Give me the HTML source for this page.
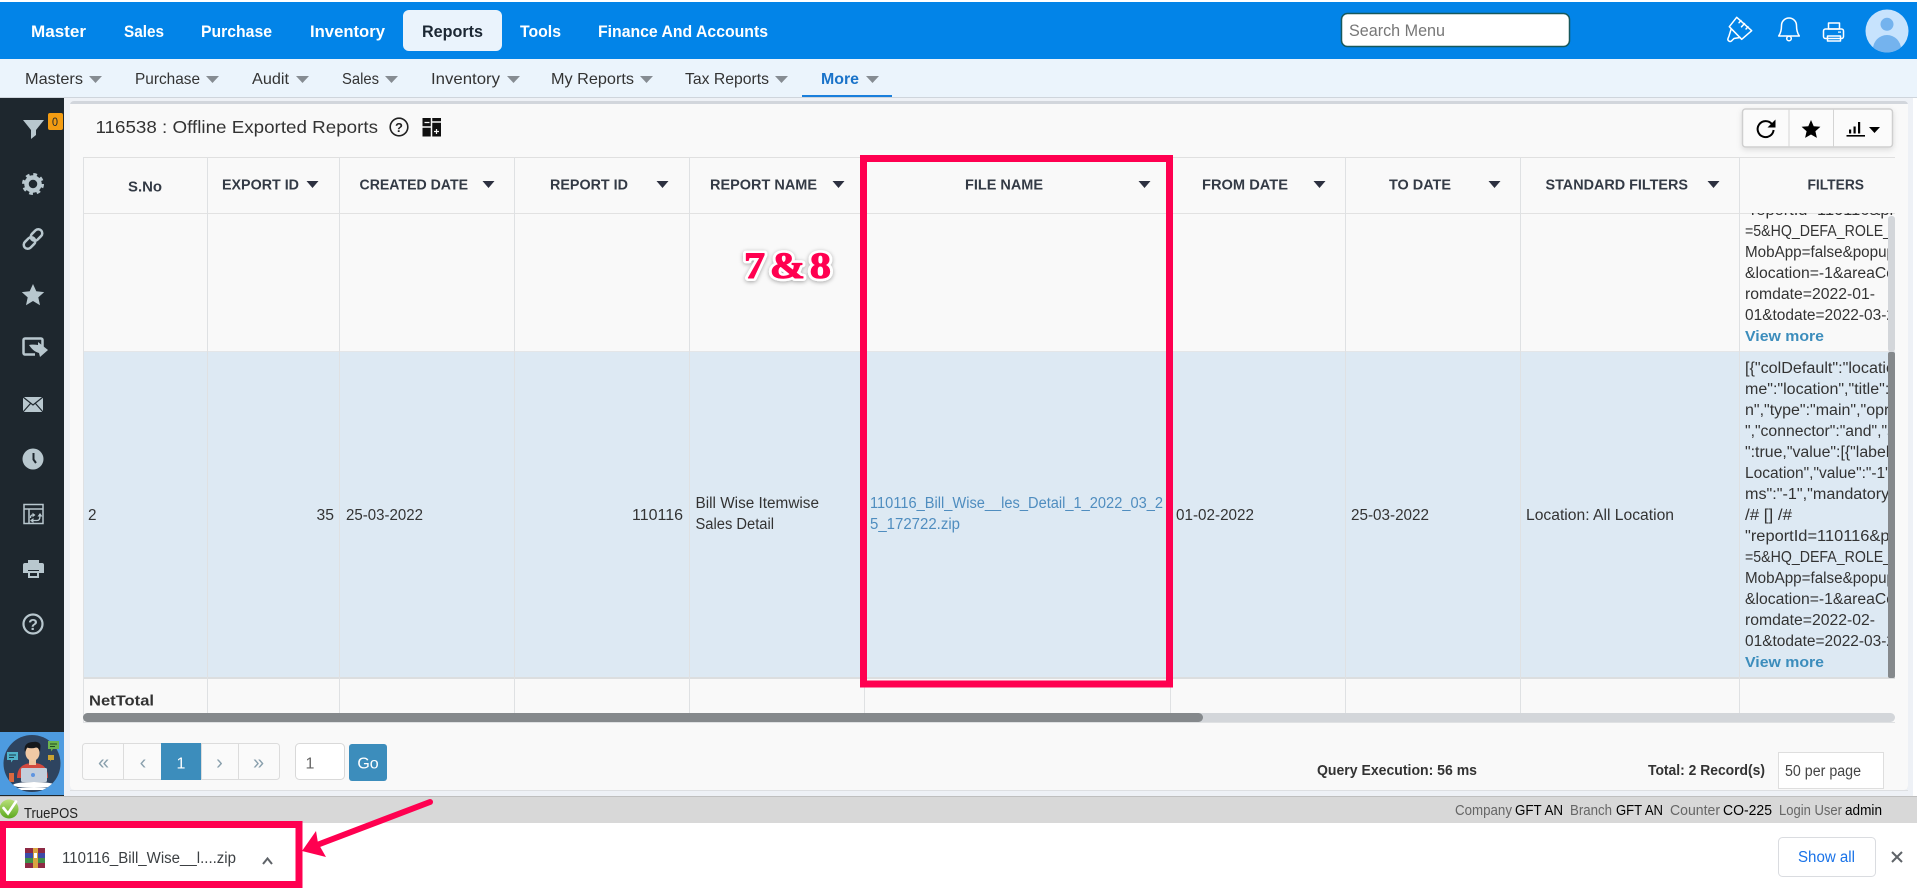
<!DOCTYPE html>
<html lang="en">
<head>
<meta charset="utf-8">
<title>Offline Exported Reports</title>
<style>
html,body{margin:0;padding:0;background:#fff;width:1917px;height:890px;overflow:hidden}
svg{display:block}
text{font-family:"Liberation Sans",Arial,sans-serif;white-space:pre}
.nav{font-size:17px;font-weight:700;fill:#fff}
.sub{font-size:16px;fill:#333}
.th{font-size:15px;font-weight:700;fill:#333a45}
.td{font-size:15.3px;fill:#333}
.lnk{font-size:15.3px;fill:#4f8dbf}
.vm{font-size:15px;font-weight:700;fill:#3c8dbc}
.b{font-size:15px;font-weight:700;fill:#333}
.st{font-size:14.5px;fill:#666}
.sv{font-size:14.5px;fill:#000}
</style>
</head>
<body>
<svg width="1917" height="890" viewBox="0 0 1917 890" xmlns="http://www.w3.org/2000/svg">
<defs>
<clipPath id="r1"><rect x="1740" y="213" width="155" height="138"/></clipPath>
<clipPath id="r2"><rect x="1740" y="352" width="155" height="325"/></clipPath>
<clipPath id="av"><circle cx="1887" cy="31" r="21.5"/></clipPath>
<clipPath id="pc"><circle cx="32" cy="763.5" r="28.5"/></clipPath>
<filter id="sh" x="-20%" y="-20%" width="140%" height="140%"><feDropShadow dx="0" dy="1" stdDeviation="2" flood-color="#000" flood-opacity=".35"/></filter>
<filter id="bs" x="-10%" y="-20%" width="120%" height="150%"><feDropShadow dx="0" dy="2" stdDeviation="3" flood-color="#000" flood-opacity=".12"/></filter>
<linearGradient id="grn" x1="0" y1="0" x2="0" y2="1"><stop offset="0" stop-color="#b9e07a"/><stop offset="1" stop-color="#5ca81e"/></linearGradient>
</defs>

<!-- page bg -->
<rect width="1917" height="890" fill="#fff"/>
<rect x="0" y="98" width="1913" height="698" fill="#eef1f6"/>

<!-- top bar -->
<rect x="0" y="2" width="1917" height="57" fill="#0284e8"/>
<rect x="403" y="10" width="99" height="41" rx="6" fill="#eaf3fc"/>
<text class="nav" x="31" y="37" textLength="55" lengthAdjust="spacingAndGlyphs">Master</text>
<text class="nav" x="124" y="37" textLength="40" lengthAdjust="spacingAndGlyphs">Sales</text>
<text class="nav" x="201" y="37" textLength="71" lengthAdjust="spacingAndGlyphs">Purchase</text>
<text class="nav" x="310" y="37" textLength="75" lengthAdjust="spacingAndGlyphs">Inventory</text>
<text class="nav" x="422" y="37" textLength="61" lengthAdjust="spacingAndGlyphs" style="fill:#1c2733">Reports</text>
<text class="nav" x="520" y="37" textLength="41" lengthAdjust="spacingAndGlyphs">Tools</text>
<text class="nav" x="598" y="37" textLength="170" lengthAdjust="spacingAndGlyphs">Finance And Accounts</text>

<!-- search -->
<rect x="1341.5" y="13.5" width="228" height="33" rx="6" fill="#fff" stroke="#17585c" stroke-width="1.5"/>
<text x="1349" y="36" font-size="16.5" fill="#777" textLength="96" lengthAdjust="spacingAndGlyphs">Search Menu</text>

<!-- header icons -->
<g fill="none" stroke="#fff" stroke-width="1.5" stroke-linejoin="round" stroke-linecap="round">
<path d="M1736.7 17.3L1751.700 30.700L1741.700 39.300L1729.300 26.700Z"/>
<path d="M1741 20.500l-2 2.200M1744.500 23.600l-3 3.200M1748 26.800l-2 2.200"/>
<path d="M1731 29.500L1729 36L1728 38.500a2.200 2.200 0 0 0 3.500 2.400L1734 38.500L1740 37.500"/>
<path d="M1789 18a7.500 7.500 0 0 0-7.500 7.500c0 5-1 8-2.800 10.500h20.600c-1.800-2.500-2.800-5.500-2.800-10.500A7.500 7.500 0 0 0 1789 18Z"/>
<circle cx="1789" cy="38.500" r="2.300"/>
<rect x="1823.500" y="29" width="20" height="9.500" rx="2"/>
<rect x="1828.500" y="23" width="11" height="6"/>
<rect x="1827.500" y="36" width="13" height="5"/>
</g>
<rect x="1838" y="31.500" width="3" height="1.200" fill="#fff"/>
<circle cx="1887" cy="31" r="21.500" fill="#c7e3fd"/>
<g clip-path="url(#av)" fill="#74b3ee"><circle cx="1887" cy="24.300" r="6.500"/><ellipse cx="1887" cy="49" rx="14" ry="14"/></g>

<!-- sub nav -->
<rect x="0" y="59" width="1917" height="38" fill="#ebf4fc"/>
<rect x="0" y="97" width="1917" height="1" fill="#cfd5dc"/>
<text class="sub" x="25" y="84" textLength="58" lengthAdjust="spacingAndGlyphs">Masters</text>
<text class="sub" x="135" y="84" textLength="65" lengthAdjust="spacingAndGlyphs">Purchase</text>
<text class="sub" x="252" y="84" textLength="37" lengthAdjust="spacingAndGlyphs">Audit</text>
<text class="sub" x="342" y="84" textLength="37" lengthAdjust="spacingAndGlyphs">Sales</text>
<text class="sub" x="431" y="84" textLength="69" lengthAdjust="spacingAndGlyphs">Inventory</text>
<text class="sub" x="551" y="84" textLength="83" lengthAdjust="spacingAndGlyphs">My Reports</text>
<text class="sub" x="685" y="84" textLength="84" lengthAdjust="spacingAndGlyphs">Tax Reports</text>
<text class="sub" x="821" y="84" textLength="38" lengthAdjust="spacingAndGlyphs" style="fill:#1a73c9;font-weight:700">More</text>
<g fill="#868c92">
<path d="M89 76h13l-6.500 7z"/><path d="M206 76h13l-6.500 7z"/><path d="M296 76h13l-6.500 7z"/><path d="M385 76h13l-6.500 7z"/><path d="M507 76h13l-6.500 7z"/><path d="M640 76h13l-6.500 7z"/><path d="M775 76h13l-6.500 7z"/><path d="M866 76h13l-6.500 7z"/>
</g>
<rect x="802" y="95" width="90" height="2" fill="#1a7fdc"/>

<!-- sidebar -->
<rect x="0" y="98" width="64" height="634" fill="#1e272e"/>
<g fill="#b8c7ce">
<path d="M23 120h21l-8 10v5l-5 4v-9z"/>
<rect x="48" y="113" width="15" height="17" rx="2" fill="#f39c12"/>
<circle cx="33" cy="184" r="6.500" fill="none" stroke="#b8c7ce" stroke-width="4.500"/>
<circle cx="33" cy="184" r="9.500" fill="none" stroke="#b8c7ce" stroke-width="3" stroke-dasharray="3.700 3.760"/>
<path d="M33 284l3.300 7.300 7.900.800-5.900 5.300 1.700 7.800L33 301l-7 4.200 1.700-7.800-5.900-5.300 7.900-.800z"/>
<circle cx="33" cy="459" r="10.500"/>
</g>
<text x="52" y="126" font-size="12" fill="#1e272e" textLength="6" lengthAdjust="spacingAndGlyphs">0</text>
<g fill="none" stroke="#b8c7ce" stroke-width="2.500">
<rect x="23" y="239" width="13" height="8" rx="4" transform="rotate(-45 29.500 243)"/>
<rect x="30" y="231" width="13" height="8" rx="4" transform="rotate(-45 36.500 235)"/>
<path d="M42.500 352v-12a1.500 1.500 0 0 0-1.500-1.500H25a1.500 1.500 0 0 0-1.500 1.500v13a1.500 1.500 0 0 0 1.500 1.500h10"/>
</g>
<path d="M29 345c5-1 7-1 9 0v-3l10 8-8 7-1-4c-3-1-6-2-10-8z" fill="#b8c7ce"/>
<path d="M28 344c4 0 7 0 10 .5" stroke="#1e272e" stroke-width="1" fill="none"/>
<rect x="23" y="397" width="20" height="15" fill="#b8c7ce"/>
<path d="M23 397l10 8 10-8M23 412l7.500-8.500M43 412l-7.500-8.500" fill="none" stroke="#1e272e" stroke-width="1.200"/>
<path d="M33.500 453v6.500l2.500 3.500" fill="none" stroke="#1e272e" stroke-width="2"/>
<rect x="24" y="504.500" width="19" height="19" fill="none" stroke="#b8c7ce" stroke-width="1.500"/>
<path d="M24 509h19M29 509v15" stroke="#b8c7ce" stroke-width="1.500" fill="none"/>
<path d="M33 520.500h4c2 0 3-1.500 3-4.500M33 515h-.5c-1.500 0-2 1-2 3" stroke="#b8c7ce" stroke-width="1.300" fill="none"/>
<path d="M30 520.500l3.500-2.500v5zM40 513l-2.500 3.500h5zM35.500 515l-3-2.300v4.600z" fill="#b8c7ce"/>
<g fill="#b8c7ce">
<rect x="28" y="560" width="11" height="4"/>
<path d="M25 563h17a2 2 0 0 1 2 2v8h-5v-3H28v3h-5v-8a2 2 0 0 1 2-2z"/>
<path d="M28 571h11v7H28zM30 573v3h7v-3z" fill-rule="evenodd"/>
</g>
<circle cx="33" cy="624" r="9.500" fill="none" stroke="#b8c7ce" stroke-width="2.200"/>
<text x="33" y="630" font-size="16" font-weight="700" fill="#b8c7ce" text-anchor="middle">?</text>

<!-- bottom avatar -->
<rect x="0" y="732" width="64" height="63" fill="#4d9be0"/>
<rect x="0" y="795" width="64" height="1" fill="#1e272e"/>
<circle cx="32" cy="763.500" r="28.500" fill="#2e4460"/>
<g clip-path="url(#pc)">
<path d="M17 778c0-11 7-15 16-15s15 4 15 15z" fill="#d2493f"/>
<rect x="29" y="758" width="7" height="7" fill="#eec6a0"/>
<ellipse cx="32.500" cy="753" rx="7" ry="8" fill="#f1c9a5"/>
<path d="M25 752c-2-8 4-10 8-10 4-1 8 1 7.500 4.500l-.5 5.500c-1-3-2-4.500-4-4.500-3 1-6 1-9 0z" fill="#15181c"/>
<rect x="21" y="768" width="26" height="14" rx="1.500" fill="#c3cedb"/>
<circle cx="33" cy="775" r="2" fill="#5f95e0"/>
<ellipse cx="34" cy="785" rx="21" ry="3" fill="#fff"/>
<rect x="14" y="788" width="40" height="2" fill="#fff"/>
<rect x="9" y="773" width="5" height="9" fill="#d9683f"/>
</g>
<path d="M7 752h11v8h-5l-2 2.500V760H7z" fill="#4fb1c9"/>
<path d="M9 755h7M9 757.500h5" stroke="#1e3a4a" stroke-width="1"/>
<path d="M48 741h11v8h-6l-2 2.500V749h-3z" fill="#6bb34f"/>
<path d="M50 744h7M50 746.500h5" stroke="#1f4a22" stroke-width="1"/>
<path d="M48 755h6v5h-3l-1 1.500V760h-2z" fill="#c9a232"/>

<!-- panel -->
<rect x="70" y="101" width="1838" height="689" rx="4" fill="#d2d6dc"/>
<path d="M70 104h1838v682a4 4 0 0 1-4 4H74a4 4 0 0 1-4-4z" fill="#f9f9f9"/>
<rect x="70" y="790" width="1838" height="1" fill="#dddfe2"/>
<rect x="1913" y="98" width="4" height="698" fill="#fff"/>

<!-- title -->
<text x="95.500" y="133" font-size="17.500" fill="#333" textLength="282.500" lengthAdjust="spacingAndGlyphs">116538 : Offline Exported Reports</text>
<circle cx="399" cy="127" r="8.800" fill="none" stroke="#222" stroke-width="1.600"/>
<text x="399" y="132" font-size="13" font-weight="700" fill="#222" text-anchor="middle">?</text>
<rect x="422.500" y="118" width="18.500" height="18.500" fill="#111"/>
<path d="M431.500 118v18.500M422.500 127h9M431.500 122h9.500" stroke="#f9f9f9" stroke-width="1.500" fill="none"/>
<path d="M424.500 122.500h5M434 131.500h5M436.500 129v5" stroke="#f9f9f9" stroke-width="1.200" fill="none"/>

<!-- toolbar -->
<rect x="1742.500" y="109" width="150" height="38" rx="3" fill="#fbfbfb" stroke="#cfcfcf" stroke-width="1.500" filter="url(#bs)"/>
<path d="M1789 109v38M1833.500 109v38" stroke="#d4d4d4" stroke-width="1"/>
<path d="M1771.800 124a8 8 0 1 0 1.800 6" fill="none" stroke="#000" stroke-width="2"/>
<path d="M1775.500 119.500v8h-8z" fill="#000"/>
<path d="M1811 120l2.700 6.200 6.700.600-5 4.500 1.500 6.600L1811 134.500l-5.900 3.400 1.500-6.600-5-4.500 6.700-.600z" fill="#000"/>
<rect x="1846.500" y="135" width="18.500" height="1.600" fill="#000"/>
<path d="M1849 129.500h2.200v4H1849zM1853.500 126.500h2.200v7h-2.200zM1858 122h2.200v11.500H1858z" fill="#000"/>
<path d="M1869 127h11l-5.500 6z" fill="#000"/>

<!-- table backgrounds -->
<rect x="83" y="157" width="1812" height="194" fill="#f9f9f9"/>
<rect x="83" y="352" width="1812" height="325" fill="#dde9f3"/>
<rect x="83" y="677" width="1812" height="2" fill="#dcdedf"/>
<rect x="83" y="157" width="1812" height="1" fill="#e0e0e0"/>
<rect x="83" y="213" width="1812" height="1" fill="#e2e2e2"/>
<rect x="83" y="351" width="1812" height="1" fill="#e4e6e8"/>
<g stroke="#dfe1e3" stroke-width="1">
<path d="M83.500 157v565M207.500 157v565M339.500 157v565M514.500 157v565M689.500 157v565M864.500 157v565M1170.500 157v565M1345.500 157v565M1520.500 157v565M1739.500 157v565"/>
</g>

<!-- table headers -->
<text class="th" x="128" y="191.500" textLength="34" lengthAdjust="spacingAndGlyphs">S.No</text>
<text class="th" x="222" y="189.500" textLength="77" lengthAdjust="spacingAndGlyphs">EXPORT ID</text>
<text class="th" x="359.500" y="189.500" textLength="108.500" lengthAdjust="spacingAndGlyphs">CREATED DATE</text>
<text class="th" x="550" y="189.500" textLength="78" lengthAdjust="spacingAndGlyphs">REPORT ID</text>
<text class="th" x="710" y="189.500" textLength="107" lengthAdjust="spacingAndGlyphs">REPORT NAME</text>
<text class="th" x="965" y="189.500" textLength="78" lengthAdjust="spacingAndGlyphs">FILE NAME</text>
<text class="th" x="1202" y="189.500" textLength="86" lengthAdjust="spacingAndGlyphs">FROM DATE</text>
<text class="th" x="1389" y="189.500" textLength="62" lengthAdjust="spacingAndGlyphs">TO DATE</text>
<text class="th" x="1545.500" y="189.500" textLength="142.500" lengthAdjust="spacingAndGlyphs">STANDARD FILTERS</text>
<text class="th" x="1807.500" y="189.500" textLength="56.500" lengthAdjust="spacingAndGlyphs">FILTERS</text>
<g fill="#2c3040">
<path d="M306.500 181h12l-6 7z"/><path d="M482.500 181h12l-6 7z"/><path d="M656.500 181h12l-6 7z"/><path d="M832.500 181h12l-6 7z"/><path d="M1138.500 181h12l-6 7z"/><path d="M1313.500 181h12l-6 7z"/><path d="M1488.500 181h12l-6 7z"/><path d="M1707.500 181h12l-6 7z"/>
</g>

<!-- row 1 filters -->
<g clip-path="url(#r1)">
<text class="td" x="1745" y="215" textLength="150" lengthAdjust="spacingAndGlyphs">"reportId=110116&amp;pr</text>
<text class="td" x="1745" y="236" textLength="150" lengthAdjust="spacingAndGlyphs">=5&amp;HQ_DEFA_ROLE_I</text>
<text class="td" x="1745" y="257" textLength="150" lengthAdjust="spacingAndGlyphs">MobApp=false&amp;popup</text>
<text class="td" x="1745" y="278" textLength="150" lengthAdjust="spacingAndGlyphs">&amp;location=-1&amp;areaCo</text>
<text class="td" x="1745" y="299" textLength="130" lengthAdjust="spacingAndGlyphs">romdate=2022-01-</text>
<text class="td" x="1745" y="320" textLength="150" lengthAdjust="spacingAndGlyphs">01&amp;todate=2022-03-2</text>
<text class="vm" x="1745" y="341" textLength="79" lengthAdjust="spacingAndGlyphs">View more</text>
</g>

<!-- row 2 -->
<text class="td" x="88" y="520">2</text>
<text class="td" x="316.500" y="520" textLength="17.500" lengthAdjust="spacingAndGlyphs">35</text>
<text class="td" x="346" y="520" textLength="77" lengthAdjust="spacingAndGlyphs">25-03-2022</text>
<text class="td" x="632" y="520" textLength="51" lengthAdjust="spacingAndGlyphs">110116</text>
<text class="td" x="695.500" y="508" textLength="123.500" lengthAdjust="spacingAndGlyphs">Bill Wise Itemwise</text>
<text class="td" x="695.500" y="529" textLength="78.500" lengthAdjust="spacingAndGlyphs">Sales Detail</text>
<text class="lnk" x="870" y="508" textLength="293" lengthAdjust="spacingAndGlyphs">110116_Bill_Wise__les_Detail_1_2022_03_2</text>
<text class="lnk" x="870" y="529" textLength="90" lengthAdjust="spacingAndGlyphs">5_172722.zip</text>
<text class="td" x="1176" y="520" textLength="78" lengthAdjust="spacingAndGlyphs">01-02-2022</text>
<text class="td" x="1351" y="520" textLength="78" lengthAdjust="spacingAndGlyphs">25-03-2022</text>
<text class="td" x="1526" y="520" textLength="148" lengthAdjust="spacingAndGlyphs">Location: All Location</text>
<g clip-path="url(#r2)">
<text class="td" x="1745" y="373" textLength="150" lengthAdjust="spacingAndGlyphs">[{"colDefault":"locatio</text>
<text class="td" x="1745" y="394" textLength="150" lengthAdjust="spacingAndGlyphs">me":"location","title":"</text>
<text class="td" x="1745" y="415" textLength="150" lengthAdjust="spacingAndGlyphs">n","type":"main","opr"</text>
<text class="td" x="1745" y="436" textLength="150" lengthAdjust="spacingAndGlyphs">","connector":"and","s</text>
<text class="td" x="1745" y="457" textLength="150" lengthAdjust="spacingAndGlyphs">":true,"value":[{"label"</text>
<text class="td" x="1745" y="478" textLength="150" lengthAdjust="spacingAndGlyphs">Location","value":"-1",</text>
<text class="td" x="1745" y="499" textLength="150" lengthAdjust="spacingAndGlyphs">ms":"-1","mandatory"</text>
<text class="td" x="1745" y="520" textLength="47" lengthAdjust="spacingAndGlyphs">/# [] /#</text>
<text class="td" x="1745" y="541" textLength="150" lengthAdjust="spacingAndGlyphs">"reportId=110116&amp;pr</text>
<text class="td" x="1745" y="562" textLength="150" lengthAdjust="spacingAndGlyphs">=5&amp;HQ_DEFA_ROLE_I</text>
<text class="td" x="1745" y="583" textLength="150" lengthAdjust="spacingAndGlyphs">MobApp=false&amp;popup</text>
<text class="td" x="1745" y="604" textLength="150" lengthAdjust="spacingAndGlyphs">&amp;location=-1&amp;areaCo</text>
<text class="td" x="1745" y="625" textLength="130" lengthAdjust="spacingAndGlyphs">romdate=2022-02-</text>
<text class="td" x="1745" y="646" textLength="150" lengthAdjust="spacingAndGlyphs">01&amp;todate=2022-03-2</text>
<text class="vm" x="1745" y="667" textLength="79" lengthAdjust="spacingAndGlyphs">View more</text>
</g>

<!-- net total row -->
<text class="b" x="89" y="705.500" textLength="65" lengthAdjust="spacingAndGlyphs">NetTotal</text>

<!-- scrollbars -->
<rect x="1888" y="216" width="7" height="136" rx="3" fill="#d3d6da"/>
<rect x="1888" y="352" width="7" height="326" rx="2" fill="#85898c"/>
<rect x="83" y="713" width="1812" height="9" rx="4.500" fill="#d3d6da"/>
<rect x="83" y="713" width="1120" height="9" rx="4.500" fill="#85898c"/>
<rect x="83" y="722" width="1812" height="1" fill="#dfe1e3"/>

<!-- pagination -->
<rect x="82.500" y="743.500" width="197" height="36" rx="3" fill="#fafafa" stroke="#dcdcdc"/>
<path d="M123.500 743.500v36M201.500 743.500v36M238.500 743.500v36" stroke="#dcdcdc"/>
<rect x="161" y="743" width="40" height="37" fill="#3c8dbc"/>
<g font-size="20" fill="#8aa0ad" text-anchor="middle">
<text x="103.500" y="769">«</text><text x="143" y="769">‹</text><text x="219.500" y="769">›</text><text x="258.500" y="769">»</text>
</g>
<text x="181" y="768.500" font-size="16" fill="#fff" text-anchor="middle">1</text>
<rect x="295.500" y="743.500" width="49" height="36" rx="4" fill="#fff" stroke="#d9d9d9"/>
<text x="310" y="768.500" font-size="16" fill="#666" text-anchor="middle">1</text>
<rect x="349" y="744" width="38" height="37" rx="3" fill="#3c8dbc"/>
<text x="368" y="768.500" font-size="16" fill="#fff" text-anchor="middle">Go</text>

<text class="b" x="1317" y="775" textLength="160" lengthAdjust="spacingAndGlyphs">Query Execution: 56 ms</text>
<text class="b" x="1648" y="775" textLength="117" lengthAdjust="spacingAndGlyphs">Total: 2 Record(s)</text>
<rect x="1778.500" y="752.500" width="105" height="36" fill="#fff" stroke="#dedede"/>
<text class="td" x="1785" y="776" textLength="76" lengthAdjust="spacingAndGlyphs" style="fill:#444">50 per page</text>

<!-- status bar -->
<rect x="0" y="796" width="1917" height="27" fill="#d8d8d8"/>
<rect x="0" y="796" width="1917" height="1" fill="#bfbfbf"/>
<circle cx="9" cy="809" r="9.500" fill="url(#grn)"/>
<path d="M3.500 808l4.500 5.500 8-12" fill="none" stroke="#fff" stroke-width="2.600" stroke-linecap="round"/>
<text x="24" y="818" font-size="14.500" fill="#222" textLength="54" lengthAdjust="spacingAndGlyphs">TruePOS</text>
<text class="st" x="1455" y="815" textLength="57" lengthAdjust="spacingAndGlyphs">Company</text>
<text class="sv" x="1515" y="815" textLength="48" lengthAdjust="spacingAndGlyphs">GFT AN</text>
<text class="st" x="1570" y="815" textLength="42" lengthAdjust="spacingAndGlyphs">Branch</text>
<text class="sv" x="1616" y="815" textLength="47" lengthAdjust="spacingAndGlyphs">GFT AN</text>
<text class="st" x="1670" y="815" textLength="50" lengthAdjust="spacingAndGlyphs">Counter</text>
<text class="sv" x="1723" y="815" textLength="49" lengthAdjust="spacingAndGlyphs">CO-225</text>
<text class="st" x="1779" y="815" textLength="63" lengthAdjust="spacingAndGlyphs">Login User</text>
<text class="sv" x="1845" y="815" textLength="37" lengthAdjust="spacingAndGlyphs">admin</text>

<!-- download shelf -->
<rect x="0" y="823" width="1917" height="67" fill="#fff"/>
<rect x="25" y="848" width="20" height="5" fill="#8e2a45"/>
<rect x="25" y="853" width="20" height="5" fill="#3d4aa8"/>
<rect x="25" y="858" width="20" height="5" fill="#3f8f49"/>
<rect x="25" y="863" width="20" height="5" fill="#8e2a45"/>
<rect x="33" y="848" width="5" height="20" fill="#d9a441"/>
<rect x="34" y="853" width="3" height="5" fill="#fff"/>
<text x="62" y="863" font-size="15.500" fill="#3c4043" textLength="174" lengthAdjust="spacingAndGlyphs">110116_Bill_Wise__l....zip</text>
<path d="M263 864l4.500-5.500 4.500 5.500" fill="none" stroke="#5f6368" stroke-width="2"/>
<rect x="1778.500" y="837.500" width="97" height="39" rx="4" fill="#fff" stroke="#dadce0"/>
<text x="1798" y="862" font-size="15.500" fill="#1a73e8" textLength="57" lengthAdjust="spacingAndGlyphs">Show all</text>
<path d="M1892 852l10 10M1902 852l-10 10" stroke="#5f6368" stroke-width="2"/>

<!-- annotations -->
<rect x="863.500" y="158.500" width="306" height="525.500" fill="none" stroke="#ff0050" stroke-width="7"/>
<rect x="2.500" y="824.500" width="296.500" height="60" fill="none" stroke="#ff0050" stroke-width="7"/>
<path d="M430 802L317 845" stroke="#ff0050" stroke-width="6" stroke-linecap="round" fill="none"/>
<path d="M302 851L316 831L318 843L326 857Z" fill="#ff0050"/>
<text x="744" y="278" font-size="37" font-weight="700" fill="#fff" stroke="#fff" stroke-width="6" stroke-linejoin="round" textLength="87" lengthAdjust="spacingAndGlyphs" filter="url(#sh)" style="font-family:'Liberation Serif',serif;word-spacing:-5px">7 &amp; 8</text>
<text x="744" y="278" font-size="37" font-weight="700" fill="#ff0050" stroke="#ff0050" stroke-width="1" stroke-linejoin="round" textLength="87" lengthAdjust="spacingAndGlyphs" style="font-family:'Liberation Serif',serif;word-spacing:-5px">7 &amp; 8</text>
</svg>
</body>
</html>
